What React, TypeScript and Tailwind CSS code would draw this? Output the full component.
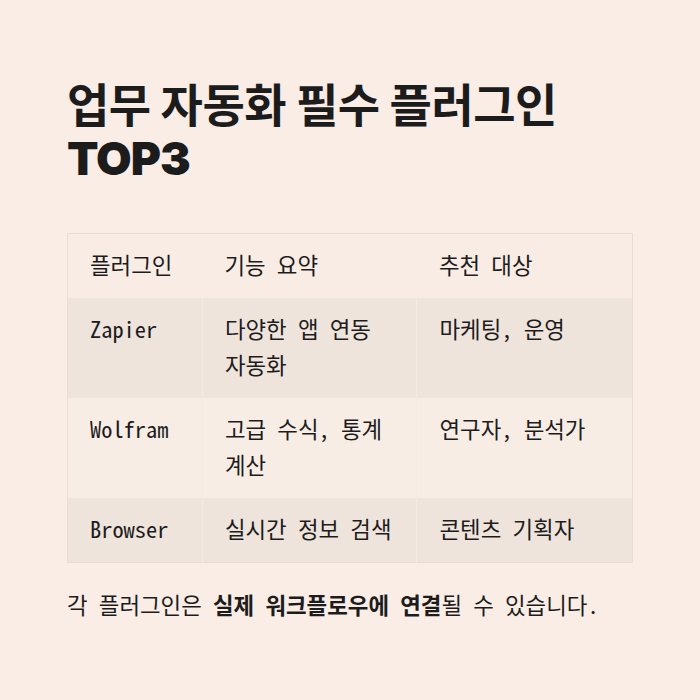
const rows = [
  { name: "Zapier", desc: "다양한 앱 연동 자동화", who: "마케팅, 운영" },
  { name: "Wolfram", desc: "고급 수식, 통계 계산", who: "연구자, 분석가" },
  { name: "Browser", desc: "실시간 정보 검색", who: "콘텐츠 기획자" },
];

const mono = "font-['Noto_Sans_Mono_CJK_KR','DejaVu_Sans_Mono','Noto_Sans_CJK_KR',monospace]";
const cell = "text-left align-top font-normal pl-[22px] pr-3 pt-[12px] pb-[16px] leading-[36px]";

export default function App() {
  return (
    <div className="w-[700px] h-[700px] bg-[#f9ede6] px-[67px] pt-[74px] text-[#1c1c1c]">
      {/* title */}
      <h1 className="font-['Noto_Sans_CJK_KR',sans-serif] font-bold text-[46px] leading-[56px] tracking-[-0.5px]">
        업무 자동화 필수 플러그인
      </h1>
      <div className="font-['Inter',sans-serif] font-black text-[46px] leading-[56px] tracking-[-1px]">
        TOP3
      </div>

      {/* table */}
      <table className={`mt-[47px] w-[566px] border border-[#eadcd2] border-collapse text-[22.4px] break-keep ${mono}`}>
        <colgroup>
          <col className="w-[135px]" />
          <col className="w-[215px]" />
          <col className="w-[216px]" />
        </colgroup>
        <thead>
          <tr className="bg-[#f8ece4]">
            <th className={cell}>플러그인</th>
            <th className={cell}>기능 요약</th>
            <th className={cell}>추천 대상</th>
          </tr>
        </thead>
        <tbody>
          {rows.map((r, i) => (
            <tr key={r.name} className={i % 2 === 0 ? "bg-[#efe4dc]" : "bg-[#f8ede5]"}>
              <td className={`${cell} border-r border-[#f5eae2]`}>{r.name}</td>
              <td className={`${cell} border-r border-[#f5eae2]`}>{r.desc}</td>
              <td className={cell}>{r.who}</td>
            </tr>
          ))}
        </tbody>
      </table>

      {/* footnote */}
      <p className={`mt-[25px] text-[22.4px] leading-[32px] ${mono}`}>
        각 플러그인은 <b>실제 워크플로우에 연결</b>될 수 있습니다.
      </p>
    </div>
  );
}
